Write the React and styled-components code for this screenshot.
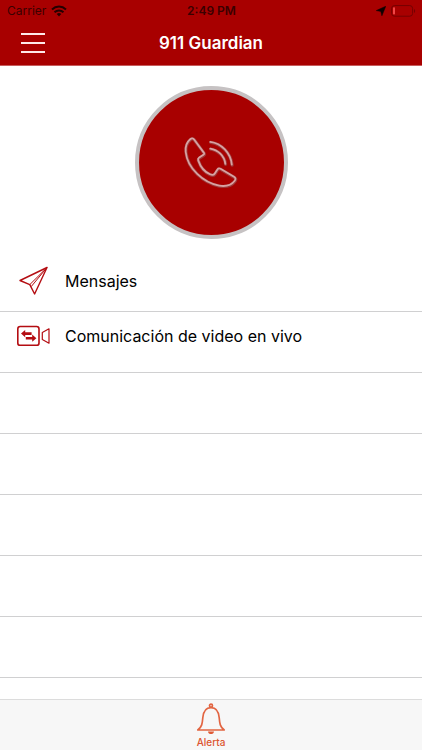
import React from "react";
import styled, { createGlobalStyle } from "styled-components";

const red = "#a80000";

const GlobalStyle = createGlobalStyle`
  *, *::before, *::after { box-sizing: border-box; }
  body {
    margin: 0;
    background: #ffffff;
    color: #000000;
    font-family: Inter, "Liberation Sans", sans-serif;
  }
  button { font: inherit; color: inherit; background: none; border: 0; padding: 0; cursor: pointer; }
`;

const Screen = styled.div`
  display: flex;
  flex-direction: column;
  height: 100vh;
  overflow: hidden;
`;

const Header = styled.header`
  flex: none;
  background: ${red};
  border-bottom: 1px solid #c85c5c;
`;

const StatusBar = styled.div`
  display: grid;
  grid-template-columns: 1fr auto 1fr;
  align-items: center;
  height: 22px;
  padding: 0 6px 0 7px;
  color: #3a0000;
  font-size: 12px;
  line-height: 16px;
`;

const StatusGroup = styled.div`
  display: flex;
  align-items: center;
  justify-content: ${(p) => (p.$end ? "flex-end" : "flex-start")};
  gap: 5px;
`;

const Clock = styled.time`
  font-weight: 600;
`;

const NavBar = styled.div`
  display: grid;
  grid-template-columns: 1fr auto 1fr;
  align-items: center;
  height: 43px;
  padding: 0 20px 2px;
`;

const MenuButton = styled.button`
  display: flex;
  justify-self: start;
`;

const Title = styled.h1`
  margin: 0;
  color: #ffffff;
  font-size: 17px;
  line-height: 24px;
  font-weight: 600;
`;

const CallArea = styled.section`
  flex: none;
  display: flex;
  justify-content: center;
  padding: 20px 0 12px;
`;

const CallButton = styled.button`
  && {
    display: flex;
    align-items: center;
    justify-content: center;
    width: 153px;
    height: 153px;
    border: 4px solid #c6c2c3;
    border-radius: 50%;
    background: ${red};
  }
`;

const List = styled.ul`
  flex: 1;
  min-height: 0;
  margin: 0;
  padding: 0;
  overflow: hidden;
  list-style: none;
`;

const Row = styled.li`
  height: 61px;
  border-bottom: 1px solid #d0d0d1;
`;

const RowButton = styled.button`
  display: grid;
  grid-template-columns: 34px 1fr;
  gap: 15px;
  align-items: center;
  width: 100%;
  height: ${(p) => (p.$raised ? "48px" : "60px")};

  && {
    padding: 0 16px;
    text-align: left;
    font-size: 16px;
    line-height: 24px;
  }
`;

const TabBar = styled.nav`
  flex: none;
  display: flex;
  justify-content: center;
  height: 51px;
  background: #f7f7f7;
  border-top: 1px solid #dcdcdc;
`;

const Tab = styled.button`
  display: flex;
  flex-direction: column;
  align-items: center;

  && {
    padding: 3px 12px 0;
    color: #dc5530;
    font-size: 10px;
    line-height: 14px;
    font-weight: 500;
  }
`;

const WifiIcon = () => (
  <svg width="16" height="12" viewBox="0 0 16 12" fill="none" stroke="#250000" strokeWidth="2" aria-hidden="true">
    <path d="M1 4.4a10.2 10.2 0 0 1 14 0M3.5 7.2a6.6 6.6 0 0 1 9 0" />
    <path d="M5.7 9a3.5 3.5 0 0 1 4.6 0L8 11.4z" fill="#250000" stroke="none" />
  </svg>
);

const LocationIcon = () => (
  <svg width="10" height="10" viewBox="0 0 10 10" aria-hidden="true">
    <path d="M9.8.2 5.9 9.8 4.8 5.4.2 4.6z" fill="#100000" stroke="#100000" strokeWidth=".5" strokeLinejoin="round" />
  </svg>
);

const BatteryIcon = () => (
  <svg width="25" height="12" viewBox="0 0 25 12" aria-hidden="true">
    <rect x=".6" y=".6" width="21" height="10.6" rx="2.8" fill="none" stroke="#740000" />
    <rect x="2" y="2.2" width="2" height="7.4" rx=".8" fill="#f04646" />
    <path d="M23 4v4c1.6-.5 1.6-3.5 0-4z" fill="#740000" />
  </svg>
);

const MenuIcon = () => (
  <svg width="26" height="22" viewBox="0 0 26 22" stroke="#ffe9e9" strokeWidth="2" aria-hidden="true">
    <path d="M1 2h24M1 11h24M1 20h24" />
  </svg>
);

const phonePath =
  "M8.2 3.2C9.6 2 11.1 2.1 12.1 3.5L21.8 16.6C22.5 17.6 22.3 18.2 21.4 18.8L17.2 21.6C16.1 22.3 15.8 23.2 16.2 24.4C18.3 30.6 22.6 35.9 28 38.3C29.9 39.1 31.8 39 32.8 37.4L35.4 33.4C36.2 32.2 37.3 32.2 38.5 32.8L52 40.8C53.6 41.8 53.9 43.1 52.7 44.7C49.2 49.4 43.5 50.7 37 49.6C21.5 46.9 5.5 32.5 3.7 16C3.1 10.7 4.8 6.1 8.2 3.2Z";
const wavesPath = "M28.3 5.8C39.4 7.2 48.8 17 49.8 28.6M28.3 12.6C36 13.8 42.4 20 43.3 27.8";

const PhoneIcon = () => (
  <svg width="58" height="54" viewBox="0 0 58 54" fill="none" strokeLinecap="round" strokeLinejoin="round" aria-hidden="true">
    <g stroke="#956060" strokeWidth="3.2" opacity=".6" transform="translate(.3 .5)">
      <path d={phonePath} />
      <path d={wavesPath} />
    </g>
    <g stroke="#d8a2a2" strokeWidth="1.8">
      <path d={phonePath} />
      <path d={wavesPath} />
    </g>
  </svg>
);

const SendIcon = () => (
  <svg width="34" height="30" viewBox="0 0 34 30" fill="none" stroke="#b40d12" strokeWidth="1.4" strokeLinejoin="round" aria-hidden="true">
    <path d="M31 1.5 4 14.5l9.8 4.1L18.6 28z" />
    <path d="M31 1.5 13.8 18.6M31 1.5 15.2 20.6" strokeWidth="1" />
  </svg>
);

const VideoIcon = () => (
  <svg width="34" height="22" viewBox="0 0 34 22" fill="none" stroke="#b40d12" strokeWidth="1.6" strokeLinejoin="round" aria-hidden="true">
    <rect x="1.8" y="1.5" width="21.2" height="18.8" rx="2.4" />
    <path d="M26.3 7.6v6.8l6.7 3.8V3.8z" strokeWidth="1.2" />
    <path d="M5 8.6 9.2 5v2.3h6.4v2.6H9.2v2.3zM20.4 13.2l-4.2 3.6v-2.3H9.8v-2.6h6.4V9.6z" fill="#b40d12" stroke="none" />
  </svg>
);

const BellIcon = () => (
  <svg width="30" height="32" viewBox="0 0 30 32" fill="none" stroke="#e26542" strokeWidth="1.7" strokeLinejoin="round" aria-hidden="true">
    <path d="M1.8 27c4.2-3.2 4.5-6.4 5-12.2C7.3 8.6 10 4.6 15 4.6s7.7 4 8.2 10.2c.5 5.8.8 9 5 12.2z" />
    <circle cx="15" cy="2.7" r="1.5" />
    <path d="M12 28.4h6c-.4 3.6-5.6 3.6-6 0z" fill="#df5a35" stroke="none" />
  </svg>
);

const emptyRows = [1, 2, 3, 4, 5, 6];

export default function App() {
  return (
    <Screen>
      <GlobalStyle />
      <Header>
        <StatusBar>
          <StatusGroup>
            <span>Carrier</span>
            <WifiIcon />
          </StatusGroup>
          <Clock>2:49 PM</Clock>
          <StatusGroup $end>
            <LocationIcon />
            <BatteryIcon />
          </StatusGroup>
        </StatusBar>
        <NavBar>
          <MenuButton type="button" aria-label="Menú">
            <MenuIcon />
          </MenuButton>
          <Title>911 Guardian</Title>
        </NavBar>
      </Header>
      <CallArea>
        <CallButton type="button" aria-label="Llamar">
          <PhoneIcon />
        </CallButton>
      </CallArea>
      <List>
        <Row>
          <RowButton type="button">
            <SendIcon />
            <span>Mensajes</span>
          </RowButton>
        </Row>
        <Row>
          <RowButton type="button" $raised>
            <VideoIcon />
            <span>Comunicación de video en vivo</span>
          </RowButton>
        </Row>
        {emptyRows.map((n) => (
          <Row key={n} aria-hidden="true" />
        ))}
      </List>
      <TabBar>
        <Tab type="button">
          <BellIcon />
          <span>Alerta</span>
        </Tab>
      </TabBar>
    </Screen>
  );
}
